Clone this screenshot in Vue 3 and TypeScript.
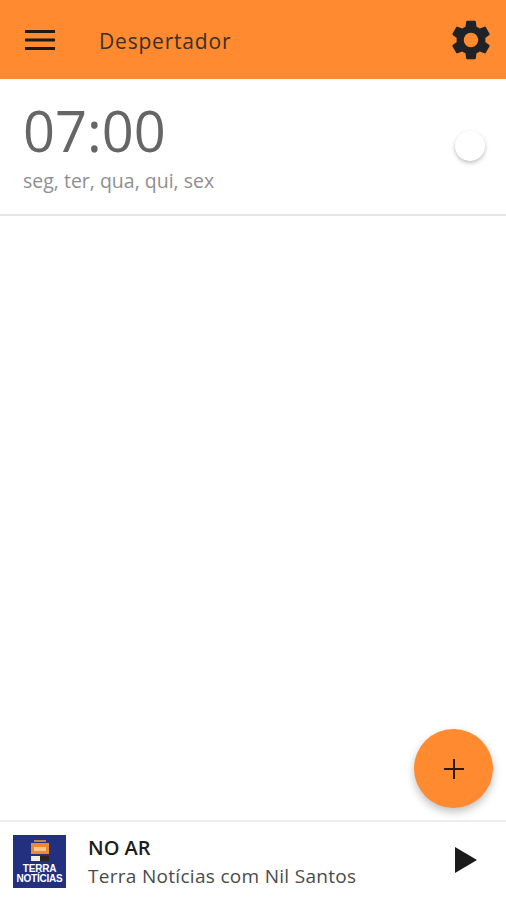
<script setup lang="ts">
const title = 'Despertador'
const alarm = { time: '07:00', days: 'seg, ter, qua, qui, sex' }
const player = { label: 'NO AR', show: 'Terra Notícias com Nil Santos' }
</script>

<template>
  <div class="page">
    <header class="bar">
      <svg class="menu" width="32" height="22" viewBox="0 0 32 22">
        <path d="M1 2.5h30M1 11h30M1 19.5h30" stroke="#1c1a18" stroke-width="3" fill="none" />
      </svg>
      <span class="title">{{ title }}</span>
      <svg class="gear" width="48" height="48" viewBox="0 0 24 24">
        <path fill="#1f2327" d="M19.14 12.94c.04-.3.06-.61.06-.94 0-.32-.02-.64-.07-.94l2.03-1.58a.49.49 0 0 0 .12-.61l-1.92-3.32a.488.488 0 0 0-.59-.22l-2.39.96c-.5-.38-1.03-.7-1.62-.94l-.36-2.54a.484.484 0 0 0-.48-.41h-3.84c-.24 0-.43.17-.47.41l-.36 2.54c-.59.24-1.13.57-1.62.94l-2.39-.96c-.22-.08-.47 0-.59.22L2.74 8.87c-.12.21-.08.47.12.61l2.03 1.58c-.05.3-.09.63-.09.94s.02.64.07.94l-2.03 1.58a.49.49 0 0 0-.12.61l1.92 3.32c.12.22.37.29.59.22l2.39-.96c.5.38 1.03.7 1.62.94l.36 2.54c.05.24.24.41.48.41h3.84c.24 0 .44-.17.47-.41l.36-2.54c.59-.24 1.13-.56 1.62-.94l2.39.96c.22.08.47 0 .59-.22l1.92-3.32c.12-.22.07-.47-.12-.61l-2.01-1.58zM12 15.6c-1.98 0-3.6-1.62-3.6-3.6s1.62-3.6 3.6-3.6 3.6 1.62 3.6 3.6-1.62 3.6-3.6 3.6z" />
      </svg>
    </header>

    <section class="alarm">
      <div class="alarm-text">
        <div class="time">{{ alarm.time }}</div>
        <div class="days">{{ alarm.days }}</div>
      </div>
      <div class="knob"></div>
    </section>

    <main class="content">
      <button class="fab" type="button" aria-label="Adicionar">
        <svg width="24" height="24" viewBox="0 0 24 24">
          <path d="M12 2v20M2 12h20" stroke="#2a1a0c" stroke-width="2" fill="none" />
        </svg>
      </button>
    </main>

    <footer class="player">
      <div class="cover">
        <svg width="18" height="22" viewBox="0 0 18 22">
          <rect x="3" y="0" width="12" height="2" fill="#c9803a" />
          <rect x="0" y="3" width="18" height="11" fill="#ee8a2c" />
          <rect x="3" y="7" width="12" height="4" fill="#f6c891" />
          <rect x="0" y="16" width="9" height="5" fill="#f1efe9" />
          <rect x="9" y="16" width="9" height="5" fill="#2a2320" />
        </svg>
        <div class="cover-name">TERRA<br />NOTÍCIAS</div>
      </div>
      <div class="now">
        <div class="label">{{ player.label }}</div>
        <div class="show">{{ player.show }}</div>
      </div>
      <svg class="play" width="24" height="28" viewBox="0 0 24 28">
        <path d="M1 1l22 13L1 27z" fill="#1a1a1a" />
      </svg>
    </footer>
  </div>
</template>

<style scoped>
.page {
  width: 506px;
  height: 900px;
  display: flex;
  flex-direction: column;
  background: #fff;
  font-family: "Open Sans", "Noto Sans", sans-serif;
  overflow: hidden;
}

.bar {
  height: 79px;
  flex: none;
  display: flex;
  align-items: center;
  padding: 0 11px 0 24px;
  background: #ff8a2f;
}

.menu {
  flex: none;
}

.title {
  flex: 1;
  margin: 2px 0 0 43px;
  font-size: 21px;
  letter-spacing: 0.8px;
  color: #3b3029;
}

.alarm {
  height: 137px;
  flex: none;
  box-sizing: border-box;
  display: flex;
  align-items: center;
  justify-content: space-between;
  padding: 0 21px 0 23px;
  border-bottom: 2px solid #e6e6e6;
}

.time {
  font-size: 56px;
  line-height: 63px;
  color: #666666;
}

.days {
  margin-top: 6px;
  font-size: 19.5px;
  line-height: 26px;
  color: #8f8f8f;
}

.knob {
  width: 30px;
  height: 30px;
  margin-top: -2px;
  border-radius: 50%;
  background: #fff;
  box-shadow: 0 2px 4px rgba(0, 0, 0, 0.25);
}

.content {
  flex: 1;
  display: flex;
  align-items: flex-end;
  justify-content: flex-end;
  padding: 0 13px 12px 0;
}

.fab {
  width: 79px;
  height: 79px;
  display: flex;
  align-items: center;
  justify-content: center;
  padding: 0;
  border: none;
  border-radius: 50%;
  background: #ff8a2f;
  box-shadow: 0 4px 9px rgba(0, 0, 0, 0.25);
}

.player {
  height: 80px;
  flex: none;
  box-sizing: border-box;
  display: flex;
  align-items: center;
  padding: 0 28px 0 13px;
  border-top: 2px solid #eeeeee;
}

.cover {
  width: 53px;
  height: 53px;
  flex: none;
  box-sizing: border-box;
  display: flex;
  flex-direction: column;
  align-items: center;
  padding-top: 5px;
  background: #22307f;
}

.cover-name {
  margin-top: 2px;
  font-family: "Liberation Sans", sans-serif;
  font-size: 10px;
  font-weight: 700;
  line-height: 10px;
  letter-spacing: -0.2px;
  text-align: center;
  color: #fff;
}

.now {
  flex: 1;
  margin: 3px 0 0 22px;
}

.label {
  font-size: 20px;
  font-weight: 600;
  line-height: 26px;
  color: #1c1c1c;
}

.show {
  margin-top: 1px;
  font-size: 19px;
  line-height: 28px;
  letter-spacing: 0.3px;
  color: #4a4a4a;
}

.play {
  margin-top: -2px;
}
</style>

<style>
html,
body {
  margin: 0;
  background: #fff;
}
</style>
